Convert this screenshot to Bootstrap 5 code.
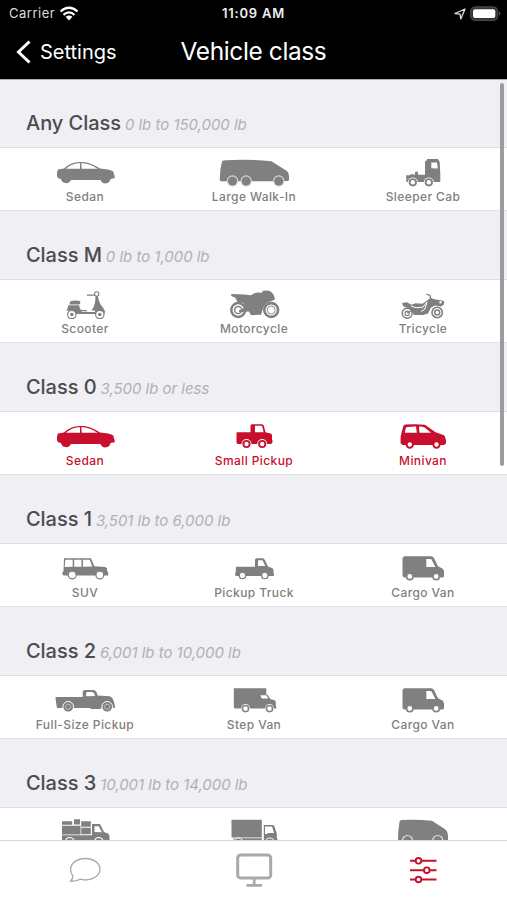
<!DOCTYPE html>
<html lang="en">
<head>
<meta charset="utf-8">
<meta name="viewport" content="width=device-width, initial-scale=1">
<title>Vehicle class</title>
<link rel="stylesheet" href="https://cdn.jsdelivr.net/npm/bootstrap@5.3.0/dist/css/bootstrap.min.css">
<style>
body{font-family:Inter,"Liberation Sans",sans-serif;background:#efeff4;height:900px}
.app{height:900px}
.topbar{height:79px;flex:none}
.status{height:27px;font-size:13px}
.carrier{font-size:13px;letter-spacing:.5px;color:#ddd;padding-left:9px}
.clock{font-size:13px;font-weight:600;letter-spacing:.8px;color:#eee}
.titles{height:52px}
.back{font-size:20px;letter-spacing:0;color:#fff;padding:10px 0 0 16px}
.screen-title{font-size:24.5px;letter-spacing:-.4px;line-height:48px;font-weight:400}
.scroller{min-height:0;box-shadow:inset 0 1px #b0b0b3}
.class-head{height:68px;padding:30px 0 0 26px;line-height:28px;white-space:nowrap}
.class-head h2{font-size:20px;font-weight:450;letter-spacing:-.05px;color:#4c4c50;line-height:28px}
.class-head em{font-size:15px;color:#b1b1b5;letter-spacing:-.03px}
.class-row{height:64px;background:#fff;border-top:1px solid #dedee2;border-bottom:1px solid #e2e2e6;color:#808080}
.vehicle{padding-top:5px}
.vehicle svg{width:90px;height:34px;display:block}
.vehicle span{font-size:12px;line-height:18px;font-weight:500;letter-spacing:.4px;margin:1px 0 0 1px;white-space:nowrap}
.picked{color:#c8102e}
.tick{position:absolute;left:457px;top:22px}
.thumb{position:absolute;left:500px;top:4px;width:4px;height:383px;border-radius:2px;background:#9c9c9f}
.tabs{height:60px;flex:none;background:#fff;border-top:1px solid #d5d5d8;color:#a9a9a9}
.tabs svg{margin-bottom:1px}
</style>
<script src="https://cdn.jsdelivr.net/npm/bootstrap@5.3.0/dist/js/bootstrap.bundle.min.js"></script>
</head>
<body>
<svg class="d-none" xmlns="http://www.w3.org/2000/svg">
<defs>
<g id="hub"><circle r="4.9" fill="#fff"/><circle r="4.1" fill="currentColor"/><circle r="2.2" fill="#fff"/></g>
<g id="disc"><circle r="5.7" fill="#d8d8d8"/><circle r="4.6" fill="currentColor"/></g>
</defs>
<symbol id="sedan" viewBox="0 0 90 34"><path fill="currentColor" d="M18 16.500 24 15.500C29 11 34 9 41 9c8 0 12 2.500 19 6.500 6 .4 11 1.200 13.500 3.200L74 22l.7.8v2.400L70.500 26A5.200 5.200 0 0 1 60.500 27H31A5.300 5.300 0 0 1 21 26l-3-.8-1-2.200v-3.500z"/><path fill="#fff" d="M26 15.800C30 12 34 10.300 40 10.200v5.600zM41.300 10.200c7 0 11 2.300 16.500 5.600H41.700z"/></symbol>
<symbol id="walkin" viewBox="0 0 90 34"><path fill="currentColor" d="M13 8.500Q14 7.300 17 7.200 40 6 62.500 8.200L70 13l8 5q2 2 2 5v3.500q0 1.500-1.500 1.500L62 28.300H11.500L10.700 27 11.300 17z"/><use href="#disc" x="23.500" y="28"/><use href="#disc" x="37.200" y="28"/><use href="#disc" x="69.800" y="28"/></symbol>
<symbol id="sleeper" viewBox="0 0 90 34"><path fill="currentColor" d="M28 22.300h4l1-1.300 4 .7V19l3-.5v3.300h7V8.500L49 7V6h11l1.700 3L62.300 21v8H28.500z"/><path fill="#fff" d="M53.300 9.500H59l.8 6-6.500-.2z"/><use href="#hub" x="34.800" y="29.300"/><use href="#hub" x="50.800" y="29.300"/></symbol>
<symbol id="scooter" viewBox="0 0 90 34"><path fill="currentColor" d="M30 16.500q5-1.700 10-.5 1 2-.6 3.600H29.500zM28.500 20.200H39q1 5 3 6.800H55l.6-19h1.500q1.500 8 3.500 11.500 3.500 4 4.700 7.500l-1 1.500Q57 25 55.500 29H36Q33 23.500 26.500 26z"/><path fill="currentColor" d="M55.600 14q-1 8-4.200 11.500H57z"/><path fill="none" stroke="currentColor" stroke-width="1.200" d="M47 10.200h8M40 25.300l7 .5"/><circle cx="56.700" cy="9" r="2.200" fill="#fff" stroke="currentColor" stroke-width="1.100"/><g fill="#fff" stroke="currentColor" stroke-width="1.200"><circle cx="31.800" cy="29.500" r="4.200"/><circle cx="59.800" cy="29.500" r="4.200"/></g><g fill="currentColor"><circle cx="31.800" cy="29.500" r="1.800"/><circle cx="59.800" cy="29.500" r="1.800"/></g></symbol>
<symbol id="motorcycle" viewBox="0 0 90 34"><g fill="none" stroke="currentColor"><circle cx="29.200" cy="25" r="6.900" stroke-width="2.500"/><circle cx="29.200" cy="25" r="3.600" stroke-width="1.500"/><circle cx="62.200" cy="25" r="6.900" stroke-width="2.600"/><circle cx="62.200" cy="25" r="4" stroke-width=".9"/></g><path fill="currentColor" d="m22 9 13.500.4 6.500.9q4-3.500 10-2.500l2-.7-1-1.100q6-1.500 9 .8l2.700 3 1.300 4.700-4 1.800Q55.500 17.800 53.500 25L52 29.700 42 30.200l-2-3.700-10 .8v-2l6-2.600-1.500-4.700-6-1-2.300-4.500-3.700-1.200z"/></symbol>
<symbol id="tricycle" viewBox="0 0 90 34"><g fill="none" stroke="currentColor"><circle cx="29.200" cy="28.300" r="5" stroke-width="1.500"/><circle cx="29.200" cy="28.300" r="2.200" stroke-width="1.200"/><circle cx="59.200" cy="27.500" r="5.200" stroke-width="1.600"/><circle cx="59.200" cy="27.500" r="2.500" stroke-width="1.500"/><path d="M48.500 9.200 52 10.500l1 4M29 28l7-3" stroke-width="1.300"/></g><path fill="currentColor" d="m24 18 5-.8 4.500 2.500 4-1.500 7 .6 5-3.500 2.500-2.300 6 1.500 6 1 2.300 1-.3 3-3 2-6-1-4 2-3 6-5 1.500h-9l-3-5-8-4z"/><path fill="none" stroke="#fff" stroke-width="1" d="m33 21 5 1.700 7-.5 4-5.200-2 7-4 2.500"/><circle cx="62.500" cy="17.300" r="1.200" fill="#fff"/></symbol>
<symbol id="smallpickup" viewBox="0 0 90 34"><path fill="currentColor" d="M28 15.300H41.500V8.500l1-1.200H53q1.500.3 2 2l1.500 6 5 1.200q1.500.4 1.500 2v4.300l.5.600v2.200L62 27H28.500l-1-1.200V16z"/><path fill="#fff" d="M46 8.700h6.300q1 .3 1.300 2l1 4.600H46z"/><use href="#hub" x="37.500" y="27"/><use href="#hub" x="53.200" y="27"/></symbol>
<symbol id="minivan" viewBox="0 0 90 34"><path fill="currentColor" d="M22.700 19 24 14l1.300-5L27 7.600q12-1 20 .2l10.500 7.500 8 2.700q2 1 2 4l.5 1v3.500L66 28H24.300l-1.800-2z"/><path fill="#fff" d="M28 10.300q6-1 10-.8l.8 6.200H26.800zM41 9.500q4 0 6 1.200l6 5H41.500z"/><g fill="#fff" stroke="currentColor" stroke-width="2"><circle cx="31.800" cy="27.500" r="3.200"/><circle cx="58.500" cy="27.500" r="3.200"/></g></symbol>
<symbol id="suv" viewBox="0 0 90 34"><path fill="currentColor" d="M24 9.300H51l3.300 8 10.700.7 2 1.300V22l1.200 1v3.400H23.500l-1-1V23l1-.8z"/><path fill="#fff" d="M25.300 10.800h7.400v7l-8 .1zM34.200 10.800h7.300v7l-7.300 0zM43 10.800h6.800l2.400 6.800-9.200.1z"/><g fill="#fff" stroke="currentColor" stroke-width="1.200"><circle cx="32.200" cy="26" r="3.900"/><circle cx="59.800" cy="26" r="3.900"/></g></symbol>
<symbol id="pickup" viewBox="0 0 90 34"><path fill="currentColor" d="M27 17.700H46V10.500l1-1.200h6.800q1.500.3 2.200 2l3 6.200 4.500 1.800q1 .4 1 2V24l.4.4V27H26.500l-.4-2.500.6-1z"/><path fill="#fff" d="M49 11.300h4.500l2.800 5.800-7.300-.2z"/><g fill="#fff" stroke="currentColor" stroke-width="1.300"><circle cx="33.500" cy="26.400" r="3.200"/><circle cx="55.800" cy="26.400" r="3.200"/></g></symbol>
<symbol id="cargo" viewBox="0 0 90 34"><path fill="currentColor" d="M26 7.300H53q2 0 3.300 2.200l3.500 7.500 4.500 2.500q1.500 1 1.700 3v5L65 28.500H26l-1.500-1.500V9z"/><path fill="#fff" d="M48.300 10H52.500l1.200.8 3.600 7.200h-9z"/><g fill="#fff" stroke="currentColor" stroke-width="1.600"><circle cx="31.800" cy="27.500" r="3.200"/><circle cx="58.200" cy="27.500" r="3.200"/></g></symbol>
<symbol id="fullpickup" viewBox="0 0 90 34"><path fill="currentColor" d="M15.500 16H42.700V10.500Q43 9 45 9h8q2.500.2 3.500 2l1.200 3.500 12 .8q3 1 4 5l1.300 5v1.500H62L60 28H51l-1-1H17l-1-5.500z"/><path fill="#fff" d="M46.500 11h5.500q1.800.4 2.300 1.700l.7 2.300-8 .2-1-.8z"/><g fill="currentColor"><g stroke="#fff"><circle cx="28.200" cy="25.800" r="5.300"/><circle cx="67.200" cy="25.800" r="5.300"/></g><g fill="none" stroke="#d0d0d0" stroke-width=".8"><circle cx="28.200" cy="25.800" r="2.600"/><circle cx="67.200" cy="25.800" r="2.600"/></g></g></symbol>
<symbol id="step" viewBox="0 0 90 34"><path fill="currentColor" d="M24.800 7.300H57.300v6.200l1.500.4 2.500 4 4.500 1.400 1 1.700V25l.5.500v2H25.500l-.7-1.500z"/><path fill="#fff" d="M51.300 14.200h6l2 3.300-6.500.1z"/><g fill="#fff" stroke="currentColor" stroke-width="1.500"><circle cx="36.500" cy="27.600" r="4.500" stroke="none"/><circle cx="60.500" cy="27.600" r="4.500" stroke="none"/><circle cx="36.500" cy="27.600" r="3.100"/><circle cx="60.500" cy="27.600" r="3.100"/></g></symbol>
<symbol id="loaded" viewBox="0 0 90 34"><path fill="currentColor" d="M22 8.300h10.200v3.500H22zM34 6.200h6v5.300h-6zM41.200 8.200h9.600v5.600h-9.600zM22 12.700h18.500v8.700H22zM41.200 14.700h9.600v6.600h-9.600zM52 11h8l4 8 4.500 1.700 1 2.500V34H22V22.300h30z"/><path fill="#fff" d="M54.500 13.300h4.300l3 6-7.300-.3z"/><g fill="none" stroke="#fff" stroke-width="1.100"><circle cx="29.800" cy="28.800" r="4.300"/><circle cx="58.800" cy="28.800" r="4.300"/></g></symbol>
<symbol id="boxtruck" viewBox="0 0 90 34"><path fill="currentColor" d="M22.500 6.700h30.300v17.700H22.500zM24.500 25.300h28.300V34H24.500zM54.800 12h9q1.200 0 1.800 1.800l2.200 6.700V25l.6.500V34H54.800z"/><path fill="#fff" d="M56 13.500h7l2 6.500H59l-1 1h-2z"/><g fill="currentColor" stroke="#fff"><circle cx="29.500" cy="30" r="5"/><circle cx="60.800" cy="30" r="5"/></g></symbol>
<symbol id="bigvan" viewBox="0 0 90 34"><path fill="currentColor" d="M21.500 8.500Q22 7 24 7q15-.8 30 .7l13.500 8.800q2.300 2 2.500 6V34H20q-.5-12 1.500-25.500z"/><g fill="currentColor" stroke="#ddd" stroke-width="1.200"><circle cx="29.500" cy="27.500" r="5"/><circle cx="59.800" cy="27.500" r="5"/></g></symbol>
</svg>

<div class="app d-flex flex-column overflow-hidden">
<header class="topbar bg-black text-white">
<div class="status row g-0 align-items-center">
<div class="col-4 d-flex align-items-center carrier"><span>Carrier</span>
<svg class="ms-1" width="20" height="15" viewBox="0 0 20 15" fill="none" stroke="#fff" stroke-width="2.300"><path d="M1.500 5.500Q10-2 18.500 5.500M4.500 8.800Q10 4 15.500 8.800"/><path d="m6.600 10.800 3.400 3.700 3.400-3.700Q10 8.300 6.600 10.800z" fill="#fff" stroke="none"/></svg></div>
<div class="col-4 text-center clock">11:09 AM</div>
<div class="col-4 d-flex justify-content-end align-items-center" style="padding-right:6px">
<svg width="48" height="17" viewBox="0 0 48 17"><path d="M2 8.500 12 4 7.800 14 7 9.200z" fill="none" stroke="#ddd" stroke-width="1.300" stroke-linejoin="round"/><rect x="17.700" y="2" width="27" height="13.400" rx="4.500" fill="#333" stroke="#484848" stroke-width="1.300"/><rect x="20" y="4.300" width="22.300" height="8.800" rx="2" fill="#fff"/><path d="M46.200 6.500q2 2 0 4z" fill="#777"/></svg></div>
</div>
<div class="titles row g-0 align-items-start">
<div class="col-4 d-flex align-items-center back"><svg width="16" height="26" viewBox="0 0 16 26" fill="none" stroke="#fff" stroke-width="3"><path d="M13.500 2.500 2.500 13l11 10.500"/></svg><span class="ms-2">Settings</span></div>
<h1 class="col-4 text-center screen-title m-0 text-nowrap">Vehicle class</h1>
</div>
</header>

<main class="scroller flex-grow-1 overflow-hidden position-relative">
<section><div class="class-head d-flex align-items-baseline gap-1"><h2 class="m-0">Any Class</h2><em>0 lb to 150,000 lb</em></div>
<div class="class-row row g-0"><div class="vehicle col-4 d-flex flex-column align-items-center"><svg><use href="#sedan"/></svg><span>Sedan</span></div><div class="vehicle col-4 d-flex flex-column align-items-center"><svg><use href="#walkin"/></svg><span>Large Walk-In</span></div><div class="vehicle col-4 d-flex flex-column align-items-center"><svg><use href="#sleeper"/></svg><span>Sleeper Cab</span></div></div></section>
<section><div class="class-head d-flex align-items-baseline gap-1"><h2 class="m-0">Class M</h2><em>0 lb to 1,000 lb</em></div>
<div class="class-row row g-0"><div class="vehicle col-4 d-flex flex-column align-items-center"><svg><use href="#scooter"/></svg><span>Scooter</span></div><div class="vehicle col-4 d-flex flex-column align-items-center"><svg><use href="#motorcycle"/></svg><span>Motorcycle</span></div><div class="vehicle col-4 d-flex flex-column align-items-center"><svg><use href="#tricycle"/></svg><span>Tricycle</span></div></div></section>
<section><div class="class-head d-flex align-items-baseline gap-1"><h2 class="m-0">Class 0</h2><em>3,500 lb or less</em></div>
<div class="class-row row g-0 picked position-relative"><div class="vehicle col-4 d-flex flex-column align-items-center"><svg><use href="#sedan"/></svg><span>Sedan</span></div><div class="vehicle col-4 d-flex flex-column align-items-center"><svg><use href="#smallpickup"/></svg><span>Small Pickup</span></div><div class="vehicle col-4 d-flex flex-column align-items-center"><svg><use href="#minivan"/></svg><span>Minivan</span></div><svg class="tick p-0" width="21" height="20" viewBox="0 0 21 20" fill="none" stroke="currentColor" stroke-width="2.300"><path d="m1.500 11 6.500 6.500L19.200 1"/></svg></div></section>
<section><div class="class-head d-flex align-items-baseline gap-1"><h2 class="m-0">Class 1</h2><em>3,501 lb to 6,000 lb</em></div>
<div class="class-row row g-0"><div class="vehicle col-4 d-flex flex-column align-items-center"><svg><use href="#suv"/></svg><span>SUV</span></div><div class="vehicle col-4 d-flex flex-column align-items-center"><svg><use href="#pickup"/></svg><span>Pickup Truck</span></div><div class="vehicle col-4 d-flex flex-column align-items-center"><svg><use href="#cargo"/></svg><span>Cargo Van</span></div></div></section>
<section><div class="class-head d-flex align-items-baseline gap-1"><h2 class="m-0">Class 2</h2><em>6,001 lb to 10,000 lb</em></div>
<div class="class-row row g-0"><div class="vehicle col-4 d-flex flex-column align-items-center"><svg><use href="#fullpickup"/></svg><span>Full-Size Pickup</span></div><div class="vehicle col-4 d-flex flex-column align-items-center"><svg><use href="#step"/></svg><span>Step Van</span></div><div class="vehicle col-4 d-flex flex-column align-items-center"><svg><use href="#cargo"/></svg><span>Cargo Van</span></div></div></section>
<section><div class="class-head d-flex align-items-baseline gap-1"><h2 class="m-0">Class 3</h2><em>10,001 lb to 14,000 lb</em></div>
<div class="class-row row g-0"><div class="vehicle col-4 d-flex flex-column align-items-center"><svg><use href="#loaded"/></svg></div><div class="vehicle col-4 d-flex flex-column align-items-center"><svg><use href="#boxtruck"/></svg></div><div class="vehicle col-4 d-flex flex-column align-items-center"><svg><use href="#bigvan"/></svg></div></div></section>
<div class="thumb"></div>
</main>

<nav class="tabs row g-0 align-items-center" aria-label="Main">
<div class="col-4 d-flex justify-content-center"><svg width="34" height="36" viewBox="0 0 34 36" fill="none" stroke="currentColor" stroke-width="1.300"><path d="M17.300 6.500c8.200 0 14.700 4.800 14.700 10.700S25.500 28 17.300 28c-2 0-3.700-.3-5.500-.8-2.800 1.700-6 2-9.300 2 2-1.800 2.500-3.500 2.200-5.500-1.300-1.700-2.100-4-2.100-6.500C2.600 11.300 9.100 6.500 17.300 6.500z"/></svg></div>
<div class="col-4 d-flex justify-content-center"><svg width="38" height="36" viewBox="0 0 38 36" fill="none" stroke="currentColor"><rect x="2.700" y="3" width="33" height="23" rx="3" stroke-width="3"/><path d="M19.200 27v6M11.500 33.300h15.500" stroke-width="2.700"/></svg></div>
<div class="col-4 d-flex justify-content-center picked"><svg width="28" height="36" viewBox="0 0 28 36" stroke="currentColor" stroke-width="1.900" fill="#fff"><path d="M1 8.800h26.500M1 18.200h26.500M1 27.500h26.500"/><circle cx="9.500" cy="8.800" r="2.800"/><circle cx="17.800" cy="18.200" r="2.800"/><circle cx="9.500" cy="27.500" r="2.800"/></svg></div>
</nav>
</div>
</body>
</html>
